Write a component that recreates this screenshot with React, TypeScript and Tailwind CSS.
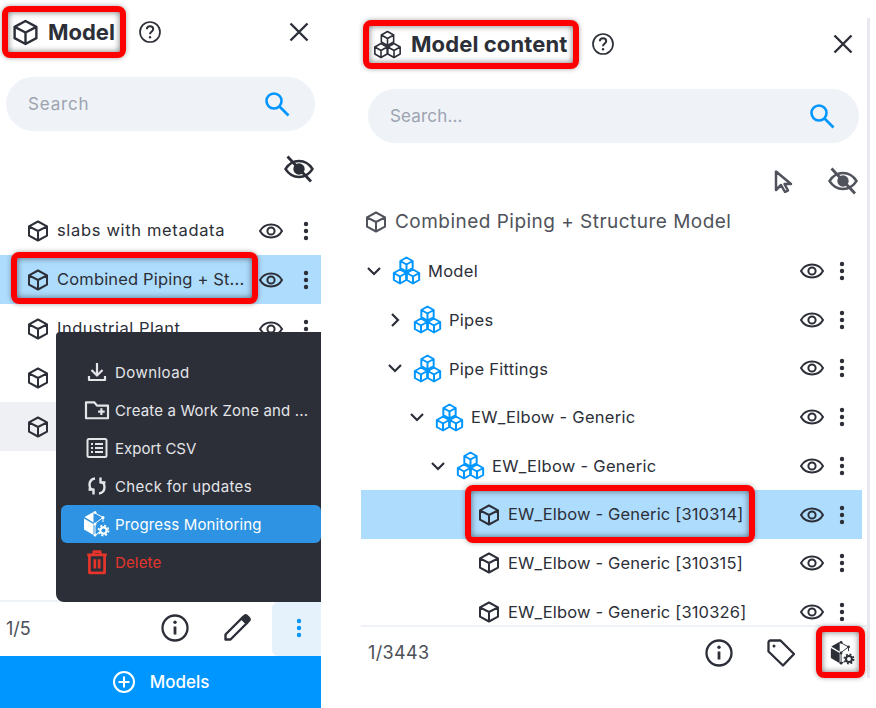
import type { ReactNode } from 'react';

const hex = (cx: number, cy: number, r: number) => {
  const w = r * 0.88;
  const h = r * 0.5;
  return `M${cx} ${cy - r}L${cx + w} ${cy - h}V${cy + h}L${cx} ${cy + r}L${cx - w} ${cy + h}V${cy - h}ZM${cx - w} ${cy - h}L${cx} ${cy}L${cx + w} ${cy - h}M${cx} ${cy}V${cy + r}`;
};

function Cube({ className = 'size-6' }: { className?: string }) {
  return (
    <svg viewBox="0 0 24 24" fill="none" stroke="currentColor" strokeWidth="2" strokeLinejoin="round" className={`${className} shrink-0`}>
      <path d="M12 2.5L21 7.3V16.7L12 21.5L3 16.7V7.3ZM3 7.3L12 12L21 7.3M12 12V21.5" />
    </svg>
  );
}

function Cubes({ className = 'size-[29px]', width = 2 }: { className?: string; width?: number }) {
  return (
    <svg viewBox="0 0 29 28" fill="none" stroke="currentColor" strokeWidth={width} strokeLinejoin="round" className={`${className} shrink-0`}>
      <path d={hex(14.5, 8, 7)} />
      <path d={hex(8, 20, 7)} />
      <path d={hex(21, 20, 7)} />
    </svg>
  );
}

function Eye() {
  return (
    <svg viewBox="0 0 24 24" fill="none" stroke="currentColor" strokeWidth="2" className="size-6 shrink-0">
      <path d="M1 12C3.5 7.6 7.5 5.5 12 5.5S20.500 7.600 23 12C20.500 16.400 16.500 18.500 12 18.500S3.500 16.400 1 12Z" />
      <circle cx="12" cy="12" r="3.600" />
    </svg>
  );
}

function EyeOff() {
  return (
    <svg viewBox="0 0 30 30" fill="none" stroke="currentColor" strokeWidth="2.400" className="size-[30px] shrink-0">
      <path d="M1.500 15C5 9.500 9.500 7 15 7S25 9.500 28.500 15C25 20.500 20.500 23 15 23S5 20.500 1.500 15Z" />
      <circle cx="15" cy="15" r="4.500" fill="currentColor" />
      <path d="M3.500 2.500L27 27.500" strokeWidth="2.800" />
    </svg>
  );
}

function Dots({ className = 'text-[#2c2f38]' }: { className?: string }) {
  return (
    <svg viewBox="0 0 24 24" fill="currentColor" className={`size-6 shrink-0 ${className}`}>
      <circle cx="12" cy="5" r="2.200" />
      <circle cx="12" cy="12" r="2.200" />
      <circle cx="12" cy="19" r="2.200" />
    </svg>
  );
}

function Help() {
  return (
    <svg viewBox="0 0 24 24" fill="none" stroke="currentColor" strokeWidth="1.700" className="size-6 shrink-0">
      <circle cx="12" cy="12" r="10" />
      <path d="M8.800 9.300C8.900 7.400 10.300 6.300 12 6.300C13.800 6.300 15.200 7.500 15.200 9.200C15.200 11.400 12 11.600 12 14.300" strokeWidth="2" />
      <circle cx="12" cy="17.300" r="1.200" fill="currentColor" stroke="none" />
    </svg>
  );
}

function Close() {
  return (
    <svg viewBox="0 0 24 24" fill="none" stroke="currentColor" strokeWidth="2.400" className="size-6 shrink-0">
      <path d="M3.500 3.500L20.500 20.500M20.500 3.500L3.500 20.500" />
    </svg>
  );
}

function SearchIcon() {
  return (
    <svg viewBox="0 0 26 26" fill="none" stroke="#0096ff" strokeWidth="2.600" className="size-[26px] shrink-0">
      <circle cx="10" cy="10" r="7.500" />
      <path d="M15.500 15.500L24.500 24.500" />
    </svg>
  );
}

function Info() {
  return (
    <svg viewBox="0 0 28 28" fill="none" stroke="currentColor" strokeWidth="2.300" className="size-7 shrink-0">
      <circle cx="14" cy="14" r="12.500" />
      <path d="M14 12.500V20.500" strokeWidth="2.800" />
      <circle cx="14" cy="8.300" r="1.700" fill="currentColor" stroke="none" />
    </svg>
  );
}

function Pencil() {
  return (
    <svg viewBox="0 0 28 28" fill="none" stroke="currentColor" strokeWidth="2.400" strokeLinejoin="round" className="size-7 shrink-0">
      <path d="M2.500 25.500V20.500L18.500 4.500L23.500 9.500L7.500 25.500Z" />
      <path d="M19 4L21.500 1.800C22.200 1.200 23 1.200 23.800 1.800L26.200 4.200C26.800 5 26.800 5.800 26.200 6.500L24 9Z" fill="currentColor" />
    </svg>
  );
}

function Tag() {
  return (
    <svg viewBox="0 0 28 28" fill="none" stroke="currentColor" strokeWidth="2.300" strokeLinejoin="round" className="size-7 shrink-0">
      <path d="M1.500 3.500C1.500 2.300 2.300 1.500 3.500 1.500H13.500L27 15L16 26.500L1.500 12.500Z" />
      <circle cx="7" cy="7" r="1.500" fill="currentColor" stroke="none" />
    </svg>
  );
}

function ProgressIcon({ className = 'size-7' }: { className?: string }) {
  return (
    <svg viewBox="0 0 28 28" className={`shrink-0 ${className}`} fill="currentColor">
      <path d="M2 8.500L11.500 14V25L2 19.500Z" />
      <path d="M2.500 7L11.500 2V12.500Z" />
      <path d="M13 3L21 7.500M13 13.500L21 7.500M21 7.500V12M13 13.500V25M13 25L16 23.500" fill="none" stroke="currentColor" strokeWidth="1" />
      <circle cx="13" cy="2.500" r="1.500" />
      <circle cx="21" cy="7.500" r="1.500" />
      <circle cx="13" cy="14" r="1.500" />
      <circle cx="13" cy="25" r="1.500" />
      <circle cx="21.500" cy="20.500" r="3.200" fill="none" stroke="currentColor" strokeWidth="2.200" />
      <circle cx="21.500" cy="20.500" r="5" fill="none" stroke="currentColor" strokeWidth="1.800" strokeDasharray="2 1.930" />
    </svg>
  );
}

function DownloadIcon() {
  return (
    <svg viewBox="0 0 24 24" fill="none" stroke="currentColor" strokeWidth="2.200" className="size-6">
      <path d="M12 3V15M6.500 10L12 15.500L17.500 10M4 16V20H20V16" strokeLinejoin="round" />
    </svg>
  );
}

function FolderIcon() {
  return (
    <svg viewBox="0 0 24 24" fill="none" stroke="currentColor" strokeWidth="2" strokeLinejoin="round" className="size-6 scale-[1.1]">
      <path d="M2 5H9.500L12 8H22V19.500H2ZM13 13.500H19M16 10.500V16.500" />
    </svg>
  );
}

function ListIcon() {
  return (
    <svg viewBox="0 0 24 24" fill="none" stroke="currentColor" strokeWidth="2" className="size-6">
      <rect x="2.500" y="3" width="19" height="18" rx="1.500" />
      <path d="M6 8H8M10 8H18M6 12H8M10 12H18M6 16H8M10 16H18" />
    </svg>
  );
}

function SyncIcon() {
  return (
    <svg viewBox="0 0 24 24" fill="none" stroke="currentColor" strokeWidth="2.400" className="size-6">
      <path d="M10 4.500C6.500 5 4.500 7.800 4.500 11C4.500 13 5.200 14.500 6.500 16" />
      <path d="M3.500 15.500H8.500V20.500" strokeLinejoin="round" />
      <path d="M14 19.500C17.500 19 19.500 16.200 19.500 13C19.500 11 18.800 9.500 17.500 8" />
      <path d="M20.500 8.500H15.500V3.500" strokeLinejoin="round" />
    </svg>
  );
}

function TrashIcon() {
  return (
    <svg viewBox="0 0 24 24" fill="none" stroke="currentColor" strokeWidth="2.500" strokeLinejoin="round" className="-ml-px -mr-px size-[26px] shrink-0">
      <path d="M3 5.500H21M9 5.500V2.500H15V5.500M5 5.500V22H19V5.500M10 9.500V18M14 9.500V18" />
    </svg>
  );
}

const fontStyle = 'font-["Inter","Liberation_Sans",sans-serif]';

// labels of the last two rows sit behind the open menu
const modelRows = [
  { id: 'slabs', label: 'slabs with metadata', bg: '', track: 'tracking-[0.04em]' },
  { id: 'combined', label: 'Combined Piping + St...', bg: 'bg-[#aedcfd]', track: 'tracking-[0.01em]' },
  { id: 'plant', label: 'Industrial Plant', bg: '', track: 'tracking-[0.03em]' },
  { id: 'hidden-1', label: '', bg: '', track: '' },
  { id: 'hidden-2', label: '', bg: 'bg-[#eff0f3]', track: '' },
];

const menuItems: { label: string; icon: ReactNode; className: string; track: string }[] = [
  { label: 'Download', icon: <DownloadIcon />, className: 'text-[#e4e5e8]', track: 'tracking-[0.03em]' },
  { label: 'Create a Work Zone and ...', icon: <FolderIcon />, className: 'text-[#e4e5e8]', track: 'tracking-[0.01em]' },
  { label: 'Export CSV', icon: <ListIcon />, className: 'text-[#e4e5e8]', track: 'tracking-normal' },
  { label: 'Check for updates', icon: <SyncIcon />, className: 'text-[#e4e5e8]', track: 'tracking-[0.025em]' },
  { label: 'Progress Monitoring', icon: <ProgressIcon className="-ml-[3px] -mr-[1px] size-7" />, className: 'bg-[#2d93e2] text-white rounded-md', track: 'tracking-[0.01em]' },
  { label: 'Delete', icon: <TrashIcon />, className: 'text-[#e5352b]', track: 'tracking-[0.01em]' },
];

const treeRows = [
  { label: 'Model', pad: 'pl-[1px]', open: true },
  { label: 'Pipes', pad: 'pl-[22px]', open: false },
  { label: 'Pipe Fittings', pad: 'pl-[22px]', open: true },
  { label: 'EW_Elbow - Generic', pad: 'pl-[44px]', open: true },
  { label: 'EW_Elbow - Generic', pad: 'pl-[65px]', open: true },
];

const leafRows = [
  { label: 'EW_Elbow - Generic [310314]', bg: 'bg-[#aedcfd]' },
  { label: 'EW_Elbow - Generic [310315]', bg: '' },
  { label: 'EW_Elbow - Generic [310326]', bg: '' },
];

function Chevron({ open }: { open: boolean }) {
  return (
    <svg viewBox="0 0 24 24" fill="none" stroke="currentColor" strokeWidth="2.200" className="size-6 shrink-0">
      <path d={open ? 'M6 9L12 15L18 9' : 'M9 6L15 12L9 18'} />
    </svg>
  );
}

function RowActions() {
  return (
    <div className="ml-auto mr-[8px] flex items-center gap-[6px]">
      <Eye />
      <Dots />
    </div>
  );
}

function Marker({ className }: { className: string }) {
  return (
    <div
      className={`pointer-events-none absolute rounded-lg border-[6px] border-[#fe0000] shadow-[0_0_5px_rgba(0,0,0,0.35),inset_0_0_6px_rgba(0,0,0,0.55)] ${className}`}
    />
  );
}

export default function App() {
  return (
    <div className={`relative flex h-[708px] w-[876px] overflow-hidden bg-white text-[#2c2f38] ${fontStyle}`}>
      {/* Model panel */}
      <div className="relative flex h-full w-[321px] shrink-0 flex-col">
        <div className="flex h-[64px] shrink-0 items-center pl-[11px]">
          <Cube className="size-[29px]" />
          <span className="ml-[8px] text-[22px] font-bold">Model</span>
          <div className="ml-[23px]"><Help /></div>
          <div className="ml-auto mr-[10px]"><Close /></div>
        </div>
        <div className="mx-[6px] mt-[13px] flex h-[54px] shrink-0 items-center rounded-full bg-[#eff2f7] pl-[22px] pr-[25px]">
          <span className="pt-[2px] text-[17px] tracking-[0.05em] text-[#9ca3af]">Search</span>
          <div className="ml-auto"><SearchIcon /></div>
        </div>
        <div className="mt-[20px] flex h-[36px] shrink-0 items-center justify-end pr-[7px]">
          <EyeOff />
        </div>
        <div className="mt-[19px]">
          {modelRows.map((row) => (
            <div key={row.id} className={`flex h-[49px] items-center pl-[26px] ${row.bg}`}>
              <Cube />
              <span className={`ml-[7px] whitespace-nowrap text-[16.500px] ${row.track}`}>{row.label}</span>
              <div className="ml-auto mr-[3px] flex items-center gap-[11px]">
                <Eye />
                <Dots />
              </div>
            </div>
          ))}
        </div>
        <div className="mt-auto flex h-[56px] shrink-0 items-stretch border-t-2 border-[#eff2f7] pl-[6px]">
          <span className="flex items-center pb-[2px] text-[18px] text-[#4b4f58]">1/5</span>
          <div className="ml-auto flex items-stretch">
            <div className="flex items-center pb-[2px]"><Info /></div>
            <div className="ml-[34px] flex items-center pb-[2px]"><Pencil /></div>
            <div className="ml-[21px] flex w-[49px] items-center justify-center rounded-l-md bg-[#e5f2fc] pb-[2px] pl-[5px]">
              <Dots className="text-[#0096ff]" />
            </div>
          </div>
        </div>
        <div className="flex h-[52px] shrink-0 items-center justify-center gap-[14px] bg-[#0096ff] text-white">
          <svg viewBox="0 0 24 24" fill="none" stroke="currentColor" strokeWidth="2" className="size-6">
            <circle cx="12" cy="12" r="10" />
            <path d="M12 6.500V17.500M6.500 12H17.500" />
          </svg>
          <span className="pt-[2px] text-[17px] font-medium">Models</span>
        </div>

        {/* Context menu */}
        <div className="absolute left-[56px] top-[332px] w-[265px] rounded-bl-lg rounded-tl-sm bg-[#2c2f38] py-[21px] pl-[5px]">
          {menuItems.map((item) => (
            <div key={item.label} className={`flex h-[38px] items-center pl-[24px] ${item.className}`}>
              {item.icon}
              <span className={`ml-[6px] whitespace-nowrap pt-[2px] text-[15px] ${item.track}`}>{item.label}</span>
            </div>
          ))}
        </div>
      </div>

      {/* Model content panel */}
      <div className="ml-[40px] mt-[18px] flex h-[660px] w-[509px] shrink-0 flex-col border-r-[3px] border-[#e8e9f0]">
        <div className="flex h-[52px] shrink-0 items-center pl-[12px]">
          <Cubes className="size-[29px]" width={1.6} />
          <span className="ml-[9px] whitespace-nowrap text-[22px] font-bold tracking-[0.005em]">Model content</span>
          <div className="ml-[24px]"><Help /></div>
          <div className="ml-auto mr-[12px]"><Close /></div>
        </div>
        <div className="ml-[7px] mr-[8px] mt-[19px] flex h-[54px] shrink-0 items-center rounded-full bg-[#eff2f7] pl-[22px] pr-[24px]">
          <span className="pt-[2px] text-[17px] tracking-[0.01em] text-[#9ca3af]">Search...</span>
          <div className="ml-auto"><SearchIcon /></div>
        </div>
        <div className="mt-[20px] flex h-[36px] shrink-0 items-center justify-end gap-[33px] pr-[9px] text-[#50535b]">
          <svg viewBox="0 0 24 24" fill="none" stroke="currentColor" strokeWidth="2.500" strokeLinejoin="round" className="size-6">
            <path d="M5 2.500V21L10 16L14 23L17 21.500L13.500 15H20Z" />
          </svg>
          <EyeOff />
        </div>
        <div className="mt-[9px] flex h-[28px] shrink-0 items-center pl-[3px] text-[#50535b]">
          <Cube />
          <span className="ml-[7px] whitespace-nowrap text-[19px] tracking-[0.025em]">Combined Piping + Structure Model</span>
        </div>
        <div className="mt-[10.500px] min-h-0 flex-1 overflow-hidden pr-[5px]">
          {treeRows.map((row, i) => (
            <div key={i} className={`flex h-[48.750px] items-center ${row.pad}`}>
              <Chevron open={row.open} />
              <span className="ml-[6px] text-[#0096ff]"><Cubes /></span>
              <span className="ml-[7px] whitespace-nowrap pt-[1px] text-[16.500px] tracking-[0.017em]">{row.label}</span>
              <RowActions />
            </div>
          ))}
          {leafRows.map((row) => (
            <div key={row.label} className={`flex h-[48.750px] items-center pl-[116px] ${row.bg}`}>
              <Cube />
              <span className="ml-[7px] whitespace-nowrap text-[16.500px] tracking-[0.01em]">{row.label}</span>
              <RowActions />
            </div>
          ))}
        </div>
        <div className="flex h-[53px] shrink-0 items-center border-t-2 border-[#eff2f7] pl-[7px]">
          <span className="text-[18px] tracking-[0.02em] text-[#4b4f58]">1/3443</span>
          <div className="ml-auto mr-[12px] flex items-center gap-[34px]">
            <Info />
            <Tag />
            <ProgressIcon className="size-[26px]" />
          </div>
        </div>
      </div>

      {/* Annotation frames */}
      <Marker className="left-[2px] top-[6px] h-[52px] w-[124px]" />
      <Marker className="left-[11px] top-[252px] h-[52px] w-[247px]" />
      <Marker className="left-[363px] top-[20px] h-[49px] w-[216px]" />
      <Marker className="left-[465px] top-[485px] h-[58px] w-[290px]" />
      <Marker className="left-[816px] top-[626px] h-[52px] w-[49px]" />
    </div>
  );
}
